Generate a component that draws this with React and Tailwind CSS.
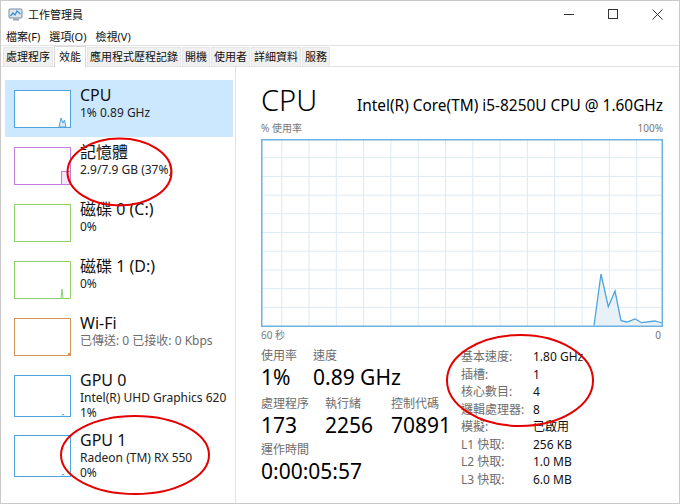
import React from "react";

function Thumb({ color, h = 38, kind }) {
  const w = 57;
  let extra = null;
  if (kind === "cpu") {
    extra = (
      <path d={`M45 ${h - 1} L47 ${h - 10} L49 ${h - 5} L50.5 ${h - 8} L52 ${h - 1} Z`} fill="#d7e9f6" stroke={color} strokeWidth="1" />
    );
  } else if (kind === "mem") {
    extra = <rect x="47.5" y={h - 13.5} width="9" height="13" fill="#f3e6f8" stroke={color} strokeWidth="1" />;
  } else if (kind === "disk1") {
    extra = <path d={`M47 ${h - 1} L48 ${h - 10} L49 ${h - 1}`} fill="none" stroke={color} strokeWidth="1" />;
  } else if (kind === "gpu") {
    extra = <path d={`M48 ${h - 1.5} L49 ${h - 3} L50 ${h - 1.5}`} fill="none" stroke={color} strokeWidth="1" />;
  } else if (kind === "wifi") {
    extra = <rect x="54" y={h - 3} width="2" height="2" fill={color} />;
  }
  return (
    <svg width={w} height={h} className="shrink-0">
      <rect x="0.5" y="0.5" width={w - 1} height={h - 1} fill="#ffffff" stroke={color} strokeWidth="1" />
      {extra}
    </svg>
  );
}

function Chart() {
  const W = 402;
  const H = 188;
  const vx = [];
  for (let x = 20.7; x < W - 2; x += 27.3) vx.push(x);
  const hy = [];
  for (let i = 1; i < 10; i++) hy.push(i * 18.7);
  const pts = [
    [333, 186.5],
    [340, 135],
    [347.3, 167.7],
    [354, 152],
    [360, 181.7],
    [366, 183],
    [374, 180],
    [380.7, 183.7],
    [394, 182],
    [401, 184],
  ];
  const line = pts.map((p, i) => (i ? "L" : "M") + p[0] + " " + p[1]).join(" ");
  const area = line + " L401 187 L333 187 Z";
  return (
    <svg width={W} height={H} className="block">
      <rect x="0" y="0" width={W} height={H} fill="#ffffff" />
      {vx.map((x) => (
        <line key={"v" + x} x1={x} y1="0" x2={x} y2={H} stroke="#dceaf4" strokeWidth="1" />
      ))}
      {hy.map((y) => (
        <line key={"h" + y} x1="0" y1={y} x2={W} y2={y} stroke="#dceaf4" strokeWidth="1" />
      ))}
      <path d={area} fill="#e8f1f8" />
      <path d={line} fill="none" stroke="#4ea3dc" strokeWidth="1.3" />
      <rect x="0.75" y="0.75" width={W - 1.5} height={H - 1.5} fill="none" stroke="#6cb2e0" strokeWidth="1.5" />
    </svg>
  );
}

function Item({ title, lines, color, kind, sel, h = 38, itemH = 57, grayLines }) {
  return (
    <div className={`flex ml-[4px] w-[228px] ${sel ? "bg-[#cce8ff]" : ""}`} style={{ height: itemH }}>
      <div className="ml-[9px] mt-[10px]">
        <Thumb color={color} h={h} kind={kind} />
      </div>
      <div className="ml-[9px] pt-[6px] flex flex-col">
        <div className="text-[16px] leading-[19px] text-[#111] whitespace-nowrap">{title}</div>
        {lines.map((l, i) => (
          <div key={i} className={`text-[12px] leading-[15px] ${grayLines ? "text-[#6d6d6d]" : "text-[#222]"} whitespace-nowrap`}>
            {l}
          </div>
        ))}
      </div>
    </div>
  );
}

export default function App() {
  return (
    <div className="w-[680px] h-[504px] bg-white relative overflow-hidden border border-[#c9c9c9] font-['Noto_Sans','Noto_Sans_CJK_TC',sans-serif] text-[#111] flex flex-col">
      {/* title bar */}
      <div className="h-[26px] flex items-center shrink-0">
        <svg width="16" height="14" className="ml-[7px] mt-[1px]" viewBox="0 0 16 14">
          <rect x="1" y="1" width="13" height="9" rx="1" fill="#dfe6ee" stroke="#7d8a99" strokeWidth="1" />
          <path d="M2.5 8 L5 5 L7 7 L9 3 L12.5 6" fill="none" stroke="#2f8fd8" strokeWidth="1.2" />
          <rect x="5" y="10.5" width="6" height="2" fill="#9aa5b1" />
        </svg>
        <span className="ml-[4px] text-[11px] leading-none">工作管理員</span>
        <div className="ml-auto flex items-center h-full">
          <div className="w-[44px] h-full flex items-center justify-center">
            <div className="w-[10px] h-px bg-[#333]" />
          </div>
          <div className="w-[44px] h-full flex items-center justify-center">
            <div className="w-[10px] h-[10px] border border-[#333]" />
          </div>
          <div className="w-[44px] h-full flex items-center justify-center">
            <svg width="11" height="11" viewBox="0 0 11 11">
              <path d="M0.5 0.5 L10.5 10.5 M10.5 0.5 L0.5 10.5" stroke="#333" strokeWidth="1" />
            </svg>
          </div>
        </div>
      </div>
      {/* menu */}
      <div className="h-[18px] flex items-center gap-[9px] pl-[5px] text-[11px] leading-none shrink-0">
        <span>檔案(F)</span>
        <span>選項(O)</span>
        <span>檢視(V)</span>
      </div>
      {/* tabs */}
      <div className="h-[22px] border-t border-b border-[#e2e2e2] flex items-end pl-[2px] gap-[1px] text-[11px] shrink-0">
        <div className="h-[19px] px-[2px] flex items-center bg-[#f0f0f0] border-x border-t border-[#e6e6e6]">處理程序</div>
        <div className="h-[21px] px-[4px] flex items-center bg-white border-x border-t border-[#d9d9d9] -mb-px">效能</div>
        <div className="h-[19px] px-[2px] flex items-center bg-[#f0f0f0] border-x border-t border-[#e6e6e6]">應用程式歷程記錄</div>
        <div className="h-[19px] px-[2px] flex items-center bg-[#f0f0f0] border-x border-t border-[#e6e6e6]">開機</div>
        <div className="h-[19px] px-[2px] flex items-center bg-[#f0f0f0] border-x border-t border-[#e6e6e6]">使用者</div>
        <div className="h-[19px] px-[2px] flex items-center bg-[#f0f0f0] border-x border-t border-[#e6e6e6]">詳細資料</div>
        <div className="h-[19px] px-[2px] flex items-center bg-[#f0f0f0] border-x border-t border-[#e6e6e6]">服務</div>
      </div>
      {/* content */}
      <div className="flex flex-1 min-h-0">
        <div className="w-[235px] border-r border-[#e3e3e3] pt-[13px] shrink-0">
          <Item title="CPU" lines={["1%  0.89 GHz"]} color="#4ea3dc" kind="cpu" sel />
          <Item title="記憶體" lines={["2.9/7.9 GB (37%)"]} color="#c07fdf" kind="mem" />
          <Item title="磁碟 0 (C:)" lines={["0%"]} color="#8fcf6b" kind="disk0" />
          <Item title="磁碟 1 (D:)" lines={["0%"]} color="#8fcf6b" kind="disk1" />
          <Item title="Wi-Fi" lines={["已傳送: 0 已接收: 0 Kbps"]} color="#d4945c" kind="wifi" grayLines />
          <Item title="GPU 0" lines={["Intel(R) UHD Graphics 620", "1%"]} color="#4ea3dc" kind="gpu" h={42} itemH={60} />
          <Item title="GPU 1" lines={["Radeon (TM) RX 550", "0%"]} color="#4ea3dc" kind="gpu" h={42} itemH={60} />
        </div>
        <div className="flex-1 pl-[25px] pr-[16px] pt-[16px] flex flex-col">
          <div className="flex items-baseline justify-between w-[402px]">
            <span className="text-[29px] leading-[34px] font-light text-black">CPU</span>
            <span className="text-[15.4px] leading-[20px] text-black">Intel(R) Core(TM) i5-8250U CPU @ 1.60GHz</span>
          </div>
          <div className="flex justify-between w-[402px] text-[10px] leading-[14px] text-[#777] mt-[4px] mb-[4px]">
            <span>% 使用率</span>
            <span>100%</span>
          </div>
          <Chart />
          <div className="flex justify-between w-[402px] text-[10px] leading-[14px] text-[#777] mt-[1px]">
            <span>60 秒</span>
            <span className="pr-[2px]">0</span>
          </div>
          <div className="flex mt-[6px]">
            <div className="w-[200px] flex flex-col">
              <div className="flex">
                <div className="w-[52px]">
                  <div className="text-[12px] leading-[16px] text-[#6d6d6d]">使用率</div>
                  <div className="text-[21px] leading-[26px] text-black">1%</div>
                </div>
                <div>
                  <div className="text-[12px] leading-[16px] text-[#6d6d6d]">速度</div>
                  <div className="text-[21px] leading-[26px] text-black">0.89 GHz</div>
                </div>
              </div>
              <div className="flex mt-[6px]">
                <div className="w-[64px]">
                  <div className="text-[12px] leading-[16px] text-[#6d6d6d]">處理程序</div>
                  <div className="text-[21px] leading-[26px] text-black">173</div>
                </div>
                <div className="w-[66px]">
                  <div className="text-[12px] leading-[16px] text-[#6d6d6d]">執行緒</div>
                  <div className="text-[21px] leading-[26px] text-black">2256</div>
                </div>
                <div>
                  <div className="text-[12px] leading-[16px] text-[#6d6d6d]">控制代碼</div>
                  <div className="text-[21px] leading-[26px] text-black">70891</div>
                </div>
              </div>
              <div className="mt-[4px]">
                <div className="text-[12px] leading-[16px] text-[#6d6d6d]">運作時間</div>
                <div className="text-[21px] leading-[26px] text-black">0:00:05:57</div>
              </div>
            </div>
            <div className="grid grid-cols-[72px_auto] text-[12px] leading-[17.5px]">
              <span className="text-[#6d6d6d]">基本速度:</span><span>1.80 GHz</span>
              <span className="text-[#6d6d6d]">插槽:</span><span>1</span>
              <span className="text-[#6d6d6d]">核心數目:</span><span>4</span>
              <span className="text-[#6d6d6d]">邏輯處理器:</span><span>8</span>
              <span className="text-[#6d6d6d]">模擬:</span><span>已啟用</span>
              <span className="text-[#6d6d6d]">L1 快取:</span><span>256 KB</span>
              <span className="text-[#6d6d6d]">L2 快取:</span><span>1.0 MB</span>
              <span className="text-[#6d6d6d]">L3 快取:</span><span>6.0 MB</span>
            </div>
          </div>
        </div>
      </div>
      {/* red annotation ellipses */}
      <svg className="absolute left-0 top-0 pointer-events-none" width="680" height="504">
        <ellipse cx="118.5" cy="171" rx="52" ry="33.5" fill="none" stroke="#e50000" strokeWidth="2" />
        <ellipse cx="134" cy="454" rx="74" ry="39" fill="none" stroke="#e50000" strokeWidth="2" />
        <ellipse cx="519" cy="379.5" rx="73" ry="45.5" fill="none" stroke="#e50000" strokeWidth="2" />
      </svg>
    </div>
  );
}
